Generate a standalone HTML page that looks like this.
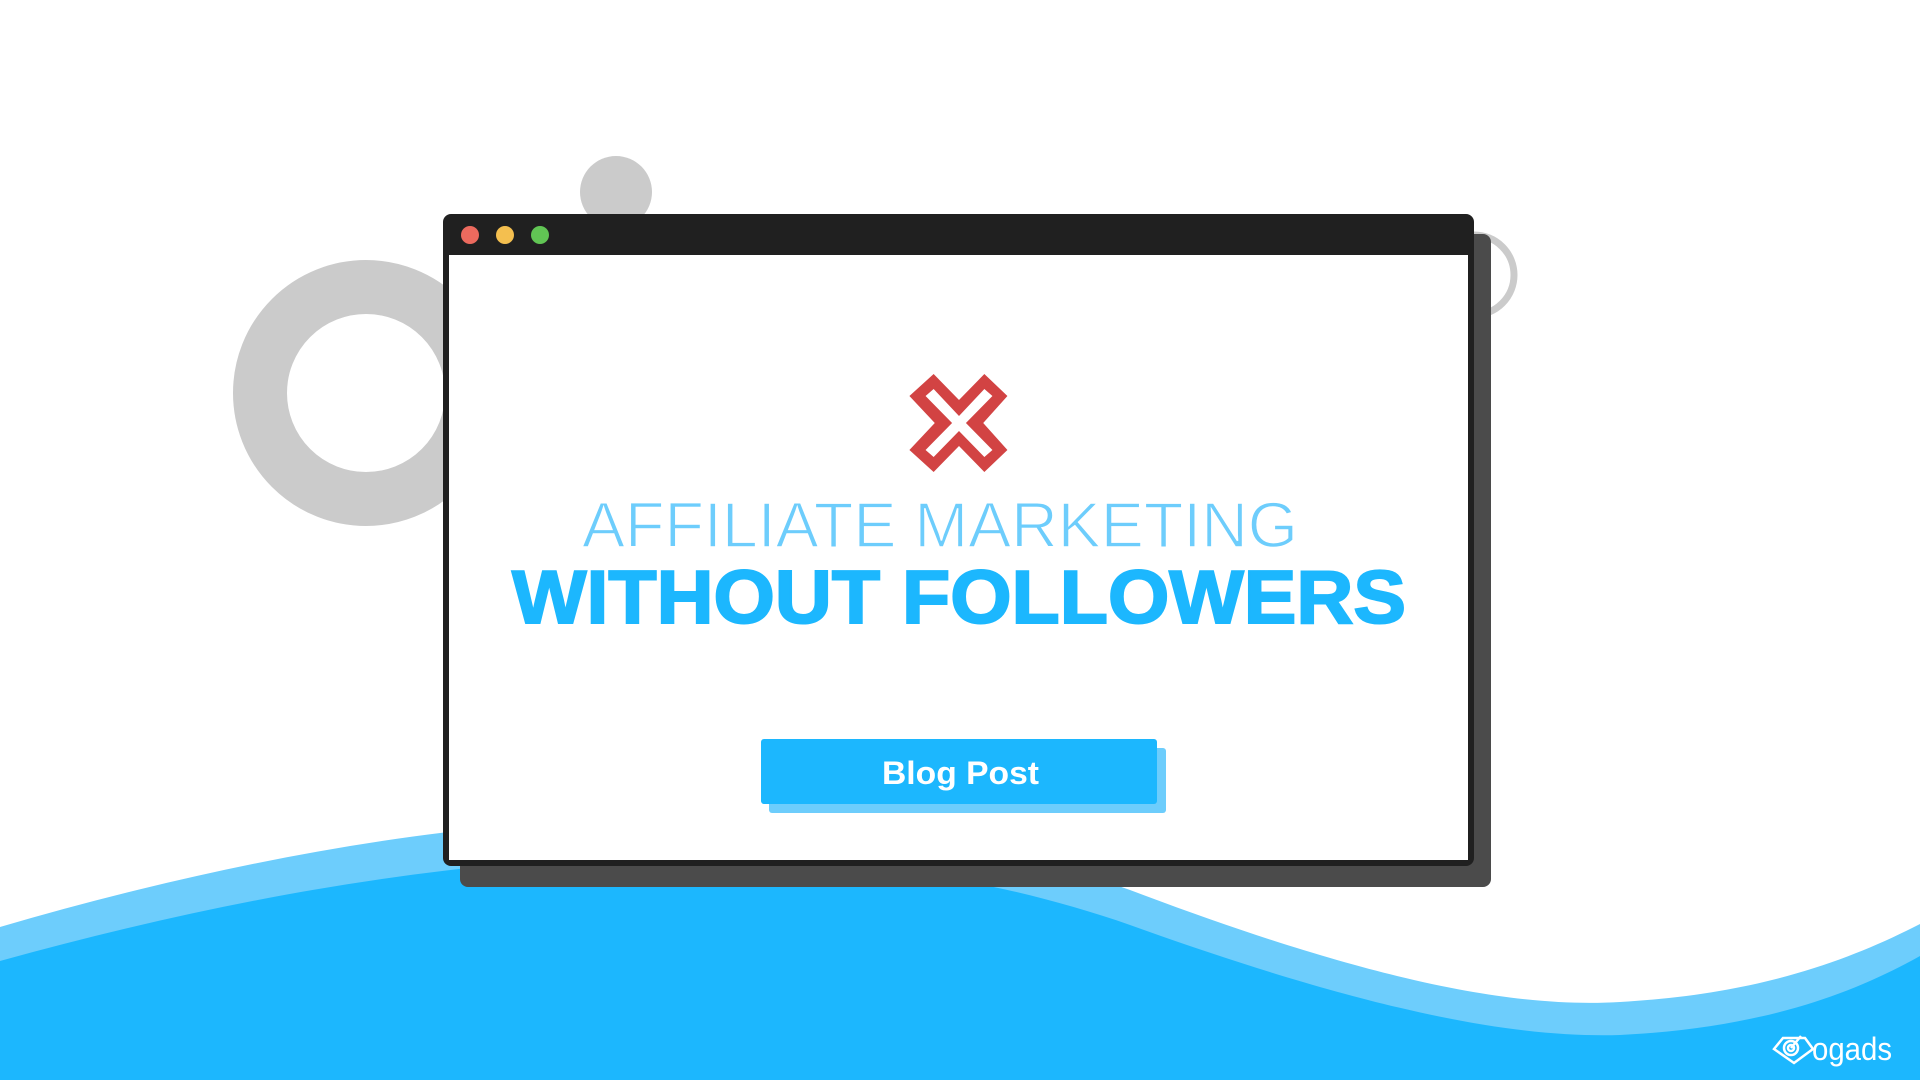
<!DOCTYPE html>
<html><head><meta charset="utf-8"><style>
html,body{margin:0;padding:0;width:1920px;height:1080px;overflow:hidden;background:#fff}
svg{display:block}
</style></head><body>
<svg width="1920" height="1080" viewBox="0 0 1920 1080" xmlns="http://www.w3.org/2000/svg">
<rect width="1920" height="1080" fill="#fff"/>
<path d="M0,927 C400,810 800,770 1130,890 C1380,985 1520,1008 1620,1002 C1760,994 1850,960 1920,924 L1920,1080 L0,1080 Z" fill="#6dcdfc"/>
<path d="M0,961 C400,850 800,810 1130,925 C1380,1015 1520,1038 1620,1035 C1760,1028 1850,995 1920,956 L1920,1080 L0,1080 Z" fill="#1cb7fe"/>
<circle cx="616" cy="192" r="36" fill="#cbcbcb"/>
<circle cx="366" cy="393" r="106" fill="none" stroke="#cbcbcb" stroke-width="54"/>
<circle cx="1474" cy="275" r="40" fill="none" stroke="#cbcbcb" stroke-width="7"/>
<rect x="460" y="234" width="1031" height="653" rx="8" fill="#4b4b4b"/>
<rect x="443" y="214" width="1031" height="652" rx="8" fill="#202020"/>
<rect x="449" y="255" width="1019" height="605" fill="#fff"/>
<circle cx="470" cy="235" r="9" fill="#ec6a5e"/>
<circle cx="505" cy="235" r="9" fill="#f4bf4f"/>
<circle cx="540" cy="235" r="9" fill="#61c554"/>
<g transform="translate(959,423) scale(1.153,1) translate(-892,-423)">
<path d="M870,374 L892,400 L914,374 L934,396 L913,423 L934,450 L914,472 L892,446 L870,472 L849,450 L871,423 L849,396 Z" fill="#d24343"/>
<path d="M870,389 L892,416 L914,389 L921,396 L898,423 L921,450 L914,457 L892,431 L870,457 L863,450 L886,423 L863,396 Z" fill="#fff"/>
</g>
<text x="582" y="547" textLength="716" lengthAdjust="spacingAndGlyphs" font-family="Liberation Sans, sans-serif" font-size="64" font-weight="400" fill="#6dcdfc" stroke="#fff" stroke-width="1.5">AFFILIATE MARKETING</text>
<text x="512" y="623" textLength="894" lengthAdjust="spacingAndGlyphs" font-family="Liberation Sans, sans-serif" font-size="75" font-weight="700" fill="#1cb7fe" stroke="#1cb7fe" stroke-width="2">WITHOUT FOLLOWERS</text>
<rect x="769" y="748" width="397" height="65" rx="3" fill="#6dcdfc"/>
<rect x="761" y="739" width="396" height="65" rx="3" fill="#1cb7fe"/>
<text x="882" y="784" textLength="157" lengthAdjust="spacingAndGlyphs" font-family="Liberation Sans, sans-serif" font-size="32" font-weight="700" fill="#fff">Blog Post</text>
<g fill="none" stroke="#fff" stroke-width="2.5">
<path d="M1774,1049 L1783,1038 L1805,1038 L1813,1049 L1794,1063 Z"/>
<circle cx="1791" cy="1048" r="7"/>
<circle cx="1791" cy="1048" r="3"/>
<path d="M1791,1048 L1801,1036"/>
</g>
<text x="1812" y="1060" font-family="Liberation Sans, sans-serif" font-size="32" fill="#fff" textLength="80" lengthAdjust="spacingAndGlyphs">ogads</text>
</svg>
</body></html>
